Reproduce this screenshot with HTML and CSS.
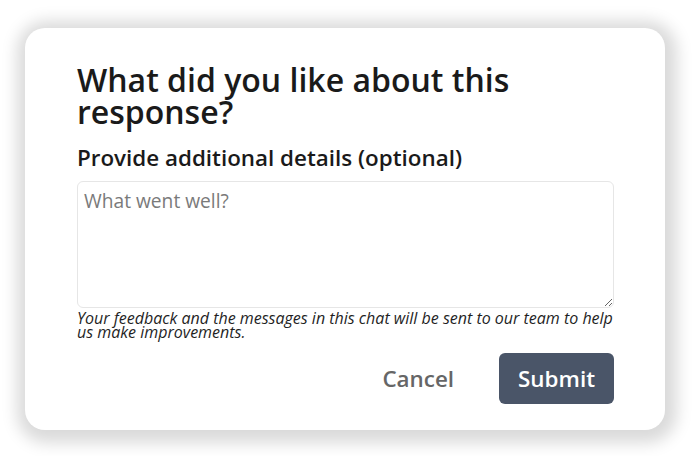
FILE: index.html
```html
<!DOCTYPE html>
<html lang="en">
<head>
<meta charset="utf-8">
<title>Feedback</title>
<link rel="stylesheet" href="styles.css">
</head>
<body>
<div class="dialog">
  <h1 class="title">What did you like about this response?</h1>
  <label class="label" for="fb">Provide additional details (optional)</label>
  <textarea id="fb" class="field" placeholder="What went well?"></textarea>
  <p class="note">Your feedback and the messages in this chat will be sent to our team to help us make improvements.</p>
  <div class="actions">
    <button class="btn btn-cancel" type="button">Cancel</button>
    <button class="btn btn-submit" type="button">Submit</button>
  </div>
</div>
</body>
</html>
```
FILE: styles.css
```css
html, body {
  margin: 0;
  padding: 0;
  background: #ffffff;
}
body {
  font-family: "Open Sans", "Noto Sans", sans-serif;
  padding: 28px 28px 26px 25px;
}
.dialog {
  width: 640px;
  height: 402px;
  box-sizing: border-box;
  padding: 36px 51px 26px 52px;
  background: #ffffff;
  border-radius: 20px;
  box-shadow: 2px 3px 16px 10px rgba(0, 0, 0, 0.15);
  display: flex;
  flex-direction: column;
}
.title {
  margin: 0;
  font-size: 32px;
  line-height: 32px;
  font-weight: 600;
  color: #1a1a1a;
}
.label {
  display: block;
  margin-top: 16px;
  font-size: 22.4px;
  line-height: 28px;
  font-weight: 600;
  color: #1a1a1a;
}
.field {
  display: block;
  margin-top: 9px;
  width: 100%;
  height: 127px;
  box-sizing: border-box;
  border: 1px solid #e6e6e6;
  border-radius: 6px;
  padding: 7px 6px;
  font-family: "Open Sans", "Noto Sans", sans-serif;
  font-size: 19.2px;
  line-height: 24px;
  color: #222;
  resize: vertical;
  outline: none;
}
.field::placeholder {
  color: #7a7a7a;
}
.note {
  margin: 3px 0 0 0;
  font-size: 16px;
  line-height: 14px;
  font-style: italic;
  color: #1f1f1f;
}
.actions {
  margin-top: auto;
  display: flex;
  justify-content: flex-end;
  align-items: center;
  gap: 26px;
}
.btn {
  height: 51px;
  padding: 0 19px;
  border: none;
  border-radius: 6px;
  font-family: "Open Sans", "Noto Sans", sans-serif;
  font-size: 22.4px;
  font-weight: 600;
  cursor: pointer;
}
.btn-cancel {
  background: transparent;
  color: #666666;
}
.btn-submit {
  background: #4a5568;
  color: #ffffff;
}
```
